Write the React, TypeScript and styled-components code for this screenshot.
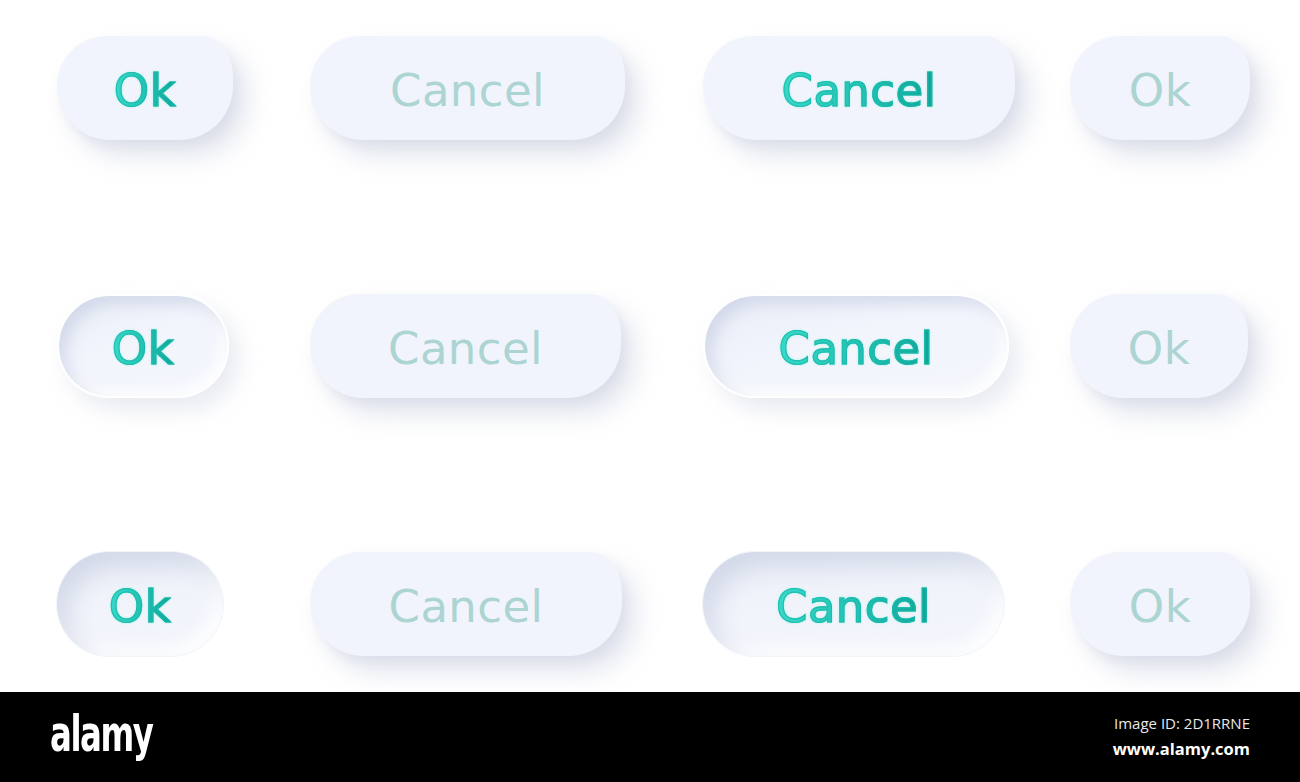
import styled, { createGlobalStyle, css } from "styled-components";

const GlobalStyle = createGlobalStyle`
  html, body {
    margin: 0;
    padding: 0;
    background: #ffffff;
  }
  body {
    font-family: "DejaVu Sans", "Noto Sans", sans-serif;
  }
`;

const Page = styled.div`
  width: 1300px;
  height: 782px;
  display: flex;
  flex-direction: column;
  overflow: hidden;
`;

const Board = styled.div`
  height: 692px;
  box-sizing: border-box;
  padding: 36px 0 0 57px;
  display: grid;
  grid-template-columns: 253px 393px 367px 1fr;
  grid-auto-rows: 104px;
  row-gap: 154px;
  background: #ffffff;
`;

type Variant = "raised" | "ring" | "pressed";

const raised = css`
  border-radius: 50px 30px 54px 54px / 50px 40px 54px 54px;
  box-shadow:
    14px 16px 26px rgba(160, 170, 198, 0.3),
    4px 6px 10px rgba(180, 188, 212, 0.16),
    -10px -10px 20px rgba(255, 255, 255, 0.9);
`;

const ring = css`
  border-radius: 54px;
  border: 2px solid #ffffff;
  background: linear-gradient(160deg, #e9edf7 0%, #f2f5fc 45%, #f4f6fc 100%);
  box-shadow:
    inset 8px 8px 14px rgba(190, 198, 222, 0.5),
    inset -6px -6px 12px rgba(255, 255, 255, 0.95),
    10px 12px 22px rgba(170, 178, 204, 0.26),
    -6px -6px 14px rgba(255, 255, 255, 0.9);
`;

const pressed = css`
  border-radius: 54px;
  background: linear-gradient(175deg, #e7ebf5 0%, #f0f3fa 40%, #f4f6fc 100%);
  box-shadow:
    inset 12px 12px 22px rgba(186, 194, 218, 0.48),
    inset -8px -8px 16px rgba(255, 255, 255, 0.95),
    0 0 0 1px rgba(238, 241, 248, 0.8);
`;

const Button = styled.button<{ $variant: Variant; $w: number }>`
  width: ${(p) => p.$w}px;
  height: 104px;
  box-sizing: border-box;
  border: none;
  padding: 4px 0 0;
  background: #f1f4fc;
  display: flex;
  align-items: center;
  justify-content: center;
  cursor: pointer;
  ${(p) => (p.$variant === "raised" ? raised : p.$variant === "ring" ? ring : pressed)}
`;

const Label = styled.span<{ $active: boolean }>`
  font-family: "DejaVu Sans", "Noto Sans", sans-serif;
  font-size: 45px;
  line-height: 1;
  letter-spacing: 0.4px;
  font-weight: 400;
  ${(p) =>
    p.$active
      ? css`
          background: linear-gradient(90deg, #38d9c9 0%, #20c0b2 55%, #10a498 100%);
          -webkit-background-clip: text;
          background-clip: text;
          -webkit-text-fill-color: transparent;
          -webkit-text-stroke: 1.1px rgba(26, 186, 172, 0.85);
          filter: drop-shadow(0 0 1.3px #c2f1ec) drop-shadow(0 0 0.6px #d4f6f2);
        `
      : css`
          color: #acd4d2;
        `}
`;

const Footer = styled.div`
  flex: 1;
  background: #000000;
  display: flex;
  align-items: center;
  justify-content: space-between;
  padding: 0 50px;
`;

const Logo = styled.div`
  font-family: "DejaVu Sans", sans-serif;
  font-stretch: condensed;
  font-weight: 700;
  font-size: 50px;
  letter-spacing: -2px;
  color: #ffffff;
  transform: scaleX(0.72);
  transform-origin: left center;
  margin-top: -6px;
`;

const Credits = styled.div`
  display: flex;
  flex-direction: column;
  align-items: flex-end;
  gap: 4px;
  color: #ffffff;
  font-family: "Open Sans", "Noto Sans", sans-serif;
  margin-top: -2px;
`;

const ImageId = styled.span`
  font-size: 15px;
  color: #e8e8e8;
`;

const Site = styled.span`
  font-size: 16.5px;
  font-weight: 700;
`;

type Cell = { text: string; active: boolean; w: number };

const rows: { variant: Variant; cells: Cell[] }[] = [
  {
    variant: "raised",
    cells: [
      { text: "Ok", active: true, w: 176 },
      { text: "Cancel", active: false, w: 315 },
      { text: "Cancel", active: true, w: 312 },
      { text: "Ok", active: false, w: 180 },
    ],
  },
  {
    variant: "ring",
    cells: [
      { text: "Ok", active: true, w: 172 },
      { text: "Cancel", active: false, w: 311 },
      { text: "Cancel", active: true, w: 306 },
      { text: "Ok", active: false, w: 178 },
    ],
  },
  {
    variant: "pressed",
    cells: [
      { text: "Ok", active: true, w: 166 },
      { text: "Cancel", active: false, w: 312 },
      { text: "Cancel", active: true, w: 301 },
      { text: "Ok", active: false, w: 180 },
    ],
  },
];

export default function App() {
  return (
    <Page>
      <GlobalStyle />
      <Board>
        {rows.map((row, r) =>
          row.cells.map((cell, c) => (
            <Button
              key={`${r}-${c}`}
              $variant={cell.active ? row.variant : "raised"}
              $w={cell.w}
            >
              <Label $active={cell.active}>{cell.text}</Label>
            </Button>
          ))
        )}
      </Board>
      <Footer>
        <Logo>alamy</Logo>
        <Credits>
          <ImageId>Image ID: 2D1RRNE</ImageId>
          <Site>www.alamy.com</Site>
        </Credits>
      </Footer>
    </Page>
  );
}
